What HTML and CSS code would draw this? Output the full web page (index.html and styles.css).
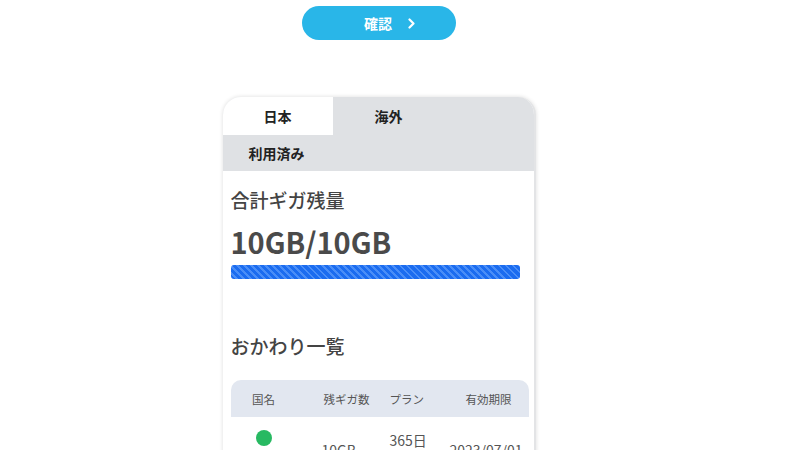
FILE: index.html
```html
<!DOCTYPE html>
<html lang="ja">
<head>
    <meta charset="UTF-8">
    <meta name="viewport" content="width=device-width, initial-scale=1.0">
    <title>ギガ残量</title>
    <link rel="stylesheet" href="styles.css">
</head>
<body>
    <div class="page">
        <button class="confirm-btn" type="button">
            <span>確認</span>
            <svg class="chevron" width="8" height="11" viewBox="0 0 8 11">
                <polyline points="1.5,1.5 5.5,5.5 1.5,9.5" fill="none" stroke="#fff" stroke-width="2.2" stroke-linecap="round" stroke-linejoin="round"/>
            </svg>
        </button>

        <div class="card">
            <div class="card-head">
                <ul class="tabs">
                    <li class="active">日本</li>
                    <li>海外</li>
                </ul>
                <div class="sub-tab">利用済み</div>
            </div>

            <div class="card-body">
                <h3 class="label">合計ギガ残量</h3>
                <p class="amount">10GB/10GB</p>
                <div class="bar"><div class="bar-fill" style="width: 100%"></div></div>

                <h3 class="label list-title">おかわり一覧</h3>
                <div class="table">
                    <div class="table-head">
                        <div class="col-country">国名</div>
                        <div class="col-giga">残ギガ数</div>
                        <div class="col-plan">プラン</div>
                        <div class="col-date">有効期限</div>
                    </div>
                    <div class="table-row">
                        <div class="col-country">
                            <span class="dot"></span>
                            <span>日本</span>
                        </div>
                        <div class="col-giga">10GB</div>
                        <div class="col-plan">365日<br>プラン</div>
                        <div class="col-date">2023/07/01</div>
                    </div>
                </div>
            </div>
        </div>
    </div>
</body>
</html>
```

FILE: styles.css
```css
body{
    margin: 0;
    background-color: #fff;
    font-family: "Noto Sans CJK JP", "Noto Sans", sans-serif;
    color: #444;
}

.page{
    display: flex;
    flex-direction: column;
    align-items: center;
    padding-right: 42px;
}

.confirm-btn{
    display: flex;
    align-items: center;
    gap: 16px;
    margin-top: 6px;
    border: none;
    border-radius: 17px;
    padding: 0 0 0 62px;
    width: 154px;
    height: 34px;
    font-family: inherit;
    font-size: 14px;
    font-weight: 700;
    color: #fff;
    background-color: #29b6e8;
    cursor: pointer;
}

.card{
    margin-top: 57px;
    border-right: 2px solid #e3e4e6;
    border-radius: 18px 18px 0 0;
    width: 311px;
    height: 400px;
    overflow: hidden;
    background-color: #fff;
    box-shadow: 0 0 4px rgba(0, 0, 0, 0.14);
}

.card-head{
    background-color: #dfe1e4;
}

.tabs{
    display: flex;
    margin: 0;
    padding: 0;
    list-style: none;
}

.tabs li{
    width: 112px;
    height: 38px;
    line-height: 38px;
    text-align: center;
    font-size: 14px;
    font-weight: 700;
    color: #222;
}

.tabs li.active{
    width: 110px;
    background-color: #fff;
}

.sub-tab{
    padding-left: 26px;
    height: 36px;
    line-height: 36px;
    font-size: 14px;
    font-weight: 700;
    color: #222;
}

.card-body{
    padding: 15px 5px 0 8px;
}

.label{
    margin: 0;
    font-size: 19px;
    font-weight: 500;
    line-height: 28px;
    color: #444;
}

.amount{
    margin: 8px 0 0;
    font-size: 29px;
    font-weight: 700;
    line-height: 39px;
    color: #4a4a4a;
}

.bar{
    margin-top: 4px;
    border-radius: 3px;
    width: 289px;
    height: 14px;
    overflow: hidden;
    background-color: #e5e8ee;
}

.bar-fill{
    height: 100%;
    background: repeating-linear-gradient(45deg, #1b6cf0 0 3px, #4a8ef7 3px 5px);
}

.list-title{
    margin-top: 53px;
}

.table{
    margin-top: 20px;
    width: 298px;
}

.table-head,
.table-row{
    display: grid;
    grid-template-columns: 66px 91px 58px 83px;
    align-items: center;
}

.table-head{
    height: 37px;
    border-radius: 10px 10px 0 0;
    font-size: 11.5px;
    color: #555;
    background-color: #e2e7f0;
}

.table-row{
    padding-top: 13px;
    font-size: 14px;
    line-height: 20px;
    color: #555;
    white-space: nowrap;
}

.col-country{
    display: flex;
    flex-direction: column;
    align-items: center;
    gap: 4px;
}

.col-giga{
    padding-left: 27px;
}

.table-row .col-giga{
    padding-left: 25px;
}

.col-plan{
    padding-left: 2px;
}

.col-date{
    padding-left: 20px;
}

.table-row .col-date{
    padding-left: 4px;
}

.dot{
    display: block;
    border-radius: 50%;
    width: 16px;
    height: 16px;
    background-color: #27b962;
}
```
